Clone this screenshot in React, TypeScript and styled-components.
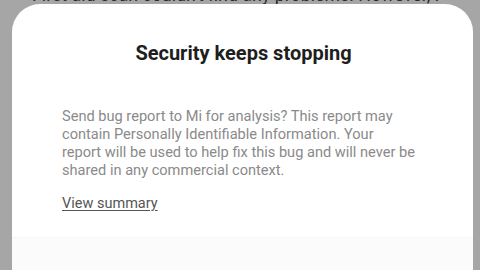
import styled, { createGlobalStyle } from "styled-components";

const GlobalStyle = createGlobalStyle`
  html, body {
    margin: 0;
    padding: 0;
    width: 480px;
    height: 270px;
    overflow: hidden;
    background: #a6a6a6;
    font-family: Roboto, "Liberation Sans", sans-serif;
  }
`;

const ScScreen = styled.div`
  width: 480px;
  height: 270px;
  overflow: hidden;
  background: #a6a6a6;
`;

const ScBehind = styled.div`
  margin-top: -14px;
  height: 18px;
  padding-left: 32px;
  font-size: 17.8px;
  line-height: 18px;
  color: #2a2a2a;
  white-space: nowrap;
  overflow: hidden;
`;

const ScDialog = styled.div`
  margin: 0 7px 0 12px;
  height: 290px;
  background: #ffffff;
  border-radius: 28px 28px 0 0;
  display: flex;
  flex-direction: column;
`;

const ScTitle = styled.h1`
  margin: 36px 0 0;
  text-align: center;
  font-size: 20px;
  font-weight: 700;
  color: #1e1e1e;
  line-height: 26px;
  padding-left: 2px;
`;

const ScBody = styled.p`
  margin: 41px 0 0;
  padding: 0 30px 0 50px;
  font-size: 14.6px;
  line-height: 18px;
  color: #8a8a8a;
  white-space: nowrap;
`;

const ScSummary = styled.a`
  margin: 16px 0 0 50px;
  align-self: flex-start;
  font-size: 14.5px;
  line-height: 18px;
  color: #555555;
  text-decoration: underline;
  text-underline-offset: 2px;
`;

const ScFooter = styled.div`
  margin-top: 24px;
  flex: 1;
  background: #fbfbfb;
  border-top: 1px solid #f6f6f6;
`;

export default function App() {
  return (
    <ScScreen>
      <GlobalStyle />
      <ScBehind>First aid scan couldn't find any problems. However, I</ScBehind>
      <ScDialog>
        <ScTitle>Security keeps stopping</ScTitle>
        <ScBody>
          Send bug report to Mi for analysis? This report may
          <br />
          contain Personally Identifiable Information. Your
          <br />
          report will be used to help fix this bug and will never be
          <br />
          shared in any commercial context.
        </ScBody>
        <ScSummary>View summary</ScSummary>
        <ScFooter />
      </ScDialog>
    </ScScreen>
  );
}
